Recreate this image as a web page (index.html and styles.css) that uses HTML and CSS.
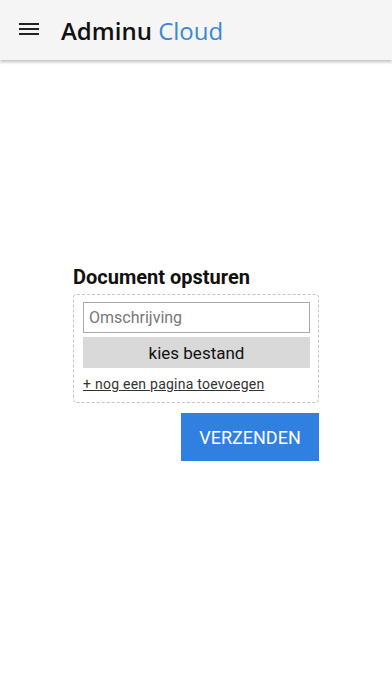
FILE: index.html
```html
<!DOCTYPE html>
<html lang="nl">
<head>
    <meta charset="UTF-8">
    <meta name="viewport" content="width=device-width, initial-scale=1.0">
    <title>Adminu Cloud</title>
    <link rel="stylesheet" href="styles.css">
</head>
<body>
    <div class="header">
        <button class="menu-btn" aria-label="Menu">
            <svg width="24" height="24" viewBox="0 0 24 24">
                <path d="M2 6h20M2 11h20M2 16h20" stroke="#222" stroke-width="2" fill="none"/>
            </svg>
        </button>
        <div class="brand"><span class="brand-main">Adminu</span> <span class="brand-sub">Cloud</span></div>
    </div>

    <div class="content">
        <form class="upload-form">
            <h2>Document opsturen</h2>
            <div class="drop-box">
                <input type="text" class="desc-input" placeholder="Omschrijving">
                <button type="button" class="file-btn">kies bestand</button>
                <a href="#" class="add-page">+ nog een pagina toevoegen</a>
            </div>
            <div class="form-actions">
                <button type="submit" class="send-btn">VERZENDEN</button>
            </div>
        </form>
    </div>
</body>
</html>
```

FILE: styles.css
```css
body {
    margin: 0;
    padding: 0;
    font-family: 'Roboto', 'Liberation Sans', sans-serif;
    background: #fff;
    color: #111;
}

.header {
    height: 60px;
    background: #f5f5f5;
    display: flex;
    align-items: center;
    box-shadow: 0 2px 3px rgba(0, 0, 0, 0.25);
}

.menu-btn {
    background: none;
    border: none;
    padding: 0;
    margin-left: 17px;
    margin-right: 20px;
    width: 24px;
    height: 24px;
    cursor: pointer;
    display: flex;
}

.brand {
    font-family: 'Open Sans', sans-serif;
    font-size: 24px;
    margin-top: 1px;
}

.brand-main {
    font-weight: 600;
    color: #111;
}

.brand-sub {
    color: #3a87d9;
}

.content {
    display: flex;
    justify-content: center;
    padding-top: 205px;
}

.upload-form {
    width: 246px;
}

.upload-form h2 {
    font-size: 20px;
    font-weight: bold;
    margin: 0 0 5px 0;
}

.drop-box {
    border: 1px dashed #c4c4c4;
    border-radius: 4px;
    padding: 7px 8px 10px 9px;
    display: flex;
    flex-direction: column;
}

.desc-input {
    height: 31px;
    box-sizing: border-box;
    border: 1px solid #a9a9a9;
    padding: 0 5px;
    font-family: 'Roboto', sans-serif;
    font-size: 16px;
    color: #333;
    outline: none;
}

.desc-input::placeholder {
    color: #777;
}

.file-btn {
    margin-top: 4px;
    height: 31px;
    background: #d9d9d9;
    border: none;
    font-family: 'Roboto', sans-serif;
    font-size: 17px;
    color: #111;
    cursor: pointer;
}

.add-page {
    margin-top: 8px;
    font-size: 14px;
    letter-spacing: 0.25px;
    color: #333;
    align-self: flex-start;
}

.form-actions {
    display: flex;
    justify-content: flex-end;
    margin-top: 10px;
}

.send-btn {
    width: 138px;
    height: 48px;
    background: #2f80e1;
    color: #fff;
    border: none;
    font-family: 'Roboto', sans-serif;
    font-size: 18px;
    cursor: pointer;
}
```
